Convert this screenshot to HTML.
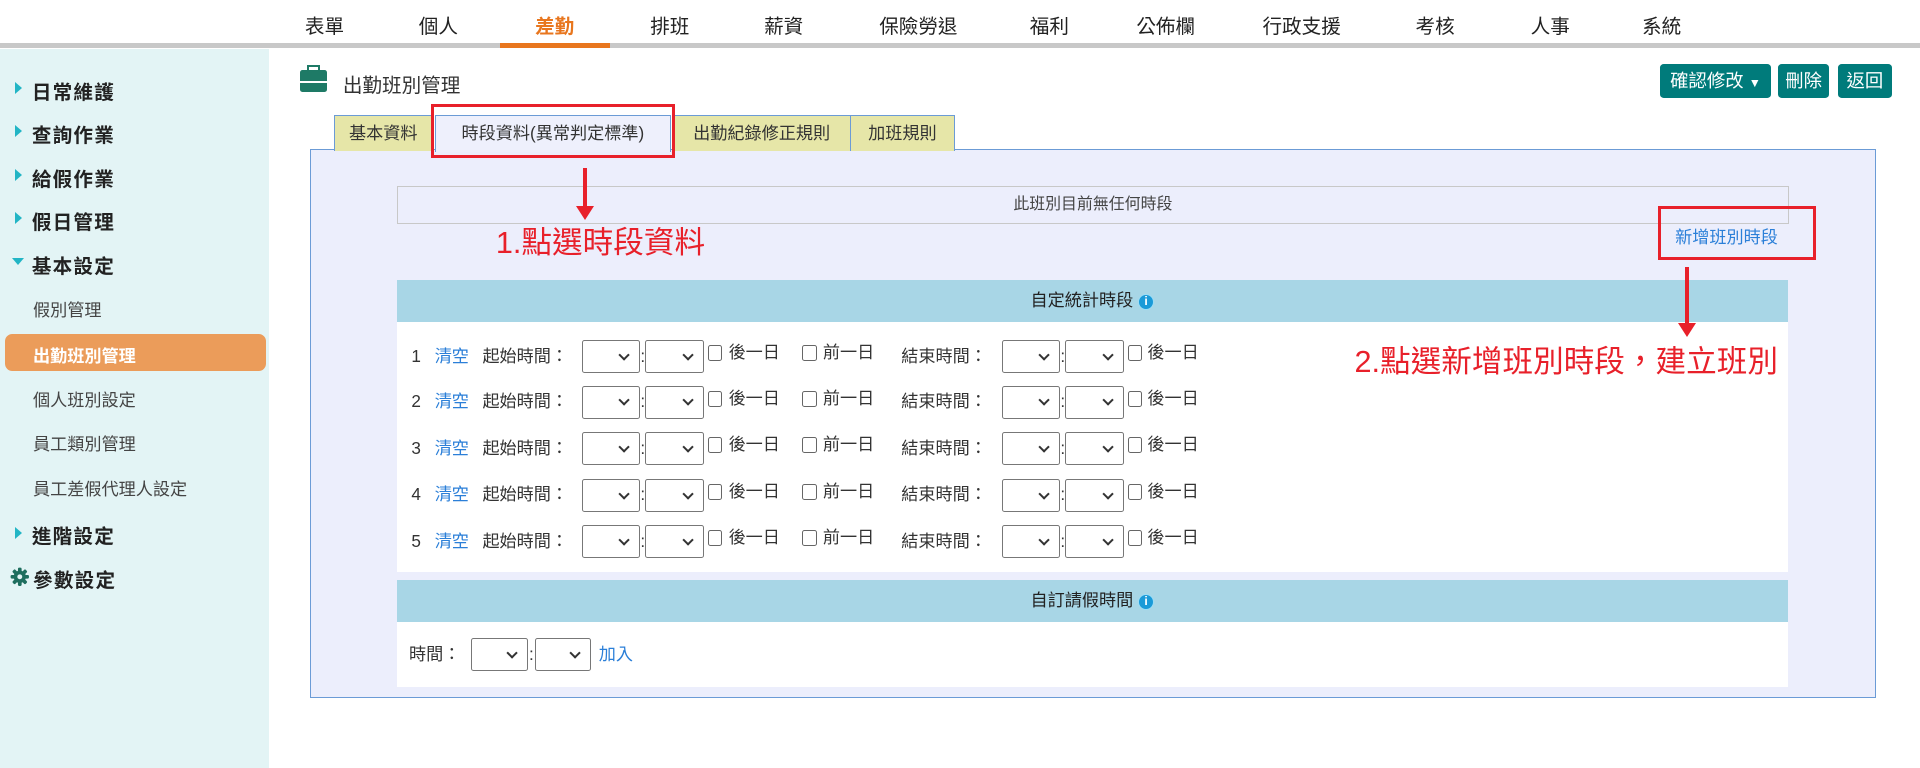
<!DOCTYPE html>
<html><head><meta charset="utf-8"><style>
*{box-sizing:border-box;margin:0;padding:0}
html,body{width:1920px;height:768px;overflow:hidden;background:#fff}
#w{position:relative;width:1568px;height:627px;zoom:1.22449;font-family:"Liberation Sans","Noto Sans CJK TC",sans-serif;color:#333}
.a{position:absolute;white-space:nowrap}
.nav{top:8px;font-size:16px;color:#222;transform:translateX(-50%)}
.side{left:0;top:40px;width:220px;height:587px;background:#e3f4f5}
.m{font-size:16px;font-weight:bold;color:#222;letter-spacing:1px;left:26px}
.tri{position:absolute;left:-14px;top:5px;width:0;height:0;border-top:5px solid transparent;border-bottom:5px solid transparent;border-left:6px solid #22b5c5}
.s{font-size:14px;color:#444;left:27px}
.btn{background:#007b7b;color:#fff;font-size:15px;border-radius:3px;height:28px;line-height:28px;text-align:center;top:52px}
.tab{top:94px;height:29px;border:1px solid #6b9bd6;border-bottom:none;background:#e6e6a8;font-size:14px;color:#333;line-height:28px;text-align:center}
.red{border:3px solid #e8202a}
.sel{width:48px;height:27px;border:1px solid #777;border-radius:2px;background:#fff}
.sel:after{content:"";position:absolute;right:9px;top:8px;width:5px;height:5px;border-right:2px solid #333;border-bottom:2px solid #333;transform:rotate(45deg)}
.cb{width:12px;height:13px;border:1px solid #666;border-radius:2px;background:#fff}
.t{font-size:14px;color:#333;line-height:20px}
.lk{font-size:14px;color:#2b7fd8;line-height:20px}
.hd{left:324px;width:1136px;height:34px;background:#a8d6e6;font-size:14px;color:#222;text-align:center;line-height:34px}
.info{display:inline-block;width:13px;height:13px;border-radius:50%;background:#1a9ad8;border:1px solid #9cdcf5;color:#fff;font-size:10px;line-height:11px;text-align:center;vertical-align:middle;margin-left:4px;font-weight:bold}
.ann{font-size:25px;color:#e8202a;line-height:30px}
</style></head><body><div id="w">
<div class="a" style="left:0;top:35px;width:1568px;height:4px;background:#c8c8c8"></div>
<div class="a" style="left:408px;top:35px;width:90px;height:4px;background:#e8761e"></div>
<div class="a nav" style="left:265px">表單</div>
<div class="a nav" style="left:358px">個人</div>
<div class="a nav" style="left:453px;color:#e8761e;font-weight:bold">差勤</div>
<div class="a nav" style="left:547px">排班</div>
<div class="a nav" style="left:640px">薪資</div>
<div class="a nav" style="left:750px">保險勞退</div>
<div class="a nav" style="left:857px">福利</div>
<div class="a nav" style="left:952px">公佈欄</div>
<div class="a nav" style="left:1063px">行政支援</div>
<div class="a nav" style="left:1172px">考核</div>
<div class="a nav" style="left:1266px">人事</div>
<div class="a nav" style="left:1357px">系統</div>

<div class="a side"></div>
<div class="a m" style="top:62px"><i class="tri"></i>日常維護</div>
<div class="a m" style="top:97px"><i class="tri"></i>查詢作業</div>
<div class="a m" style="top:133px"><i class="tri"></i>給假作業</div>
<div class="a m" style="top:168px"><i class="tri"></i>假日管理</div>
<div class="a m" style="top:204px"><i class="tri" style="left:-16px;top:7px;border-left:5px solid transparent;border-right:5px solid transparent;border-top:6px solid #22b5c5;border-bottom:none"></i>基本設定</div>
<div class="a s" style="top:242px">假別管理</div>
<div class="a" style="left:4px;top:273px;width:213px;height:30px;background:#eb9c5a;border-radius:6px"></div>
<div class="a s" style="top:279px;color:#fff;font-weight:bold">出勤班別管理</div>
<div class="a s" style="top:315px">個人班別設定</div>
<div class="a s" style="top:351px">員工類別管理</div>
<div class="a s" style="top:388px">員工差假代理人設定</div>
<div class="a m" style="top:425px"><i class="tri"></i>進階設定</div>
<svg class="a" style="left:8px;top:463px" width="16" height="16" viewBox="0 0 16 16"><g fill="#1e6e5e"><circle cx="8" cy="8" r="5"/><rect x="6.5" y="0.5" width="3" height="15" rx="1"/><rect x="0.5" y="6.5" width="15" height="3" rx="1"/><rect x="6.5" y="0.5" width="3" height="15" rx="1" transform="rotate(45 8 8)"/><rect x="6.5" y="0.5" width="3" height="15" rx="1" transform="rotate(-45 8 8)"/></g><circle cx="8" cy="8" r="2" fill="#e3f4f5"/></svg>
<div class="a m" style="top:461px;left:27px">參數設定</div>

<div class="a" style="left:245px;top:57px;width:22px;height:18px;background:#1e7a66;border-radius:2px"></div>
<div class="a" style="left:251px;top:53px;width:10px;height:5px;border:2px solid #1e7a66;border-bottom:none"></div>
<div class="a" style="left:245px;top:66px;width:22px;height:2px;background:#fff"></div>
<div class="a" style="left:280px;top:56px;font-size:16px;color:#333">出勤班別管理</div>

<div class="a btn" style="left:1356px;width:90px">確認修改 <span style="font-size:10px">▼</span></div>
<div class="a btn" style="left:1452px;width:42px">刪除</div>
<div class="a btn" style="left:1501px;width:44px">返回</div>

<div class="a" style="left:253px;top:122px;width:1279px;height:448px;background:#eceefc;border:1px solid #6b9bd6"></div>
<div class="a tab" style="left:273px;width:80px">基本資料</div>
<div class="a tab" style="left:355px;width:193px;background:#eef0fc;height:30px">時段資料(異常判定標準)</div>
<div class="a tab" style="left:549px;width:146px">出勤紀錄修正規則</div>
<div class="a tab" style="left:694px;width:86px">加班規則</div>
<div class="a red" style="left:352px;top:85px;width:199px;height:44px"></div>

<div class="a" style="left:324px;top:152px;width:1137px;height:31px;border:1px solid #c8c8c8;font-size:13px;text-align:center;line-height:29px;color:#444">此班別目前無任何時段</div>
<div class="a lk" style="left:1368px;top:184px">新增班別時段</div>
<div class="a red" style="left:1354px;top:168px;width:129px;height:44px"></div>

<div class="a hd" style="top:229px">自定統計時段<span class="info">i</span></div>
<div class="a" style="left:324px;top:263px;width:1136px;height:204px;background:#fff"></div>
<div class="a hd" style="top:474px">自訂請假時間<span class="info">i</span></div>
<div class="a" style="left:324px;top:508px;width:1136px;height:53px;background:#fff"></div>

<div id="rows"></div>
<div class="a t" style="left:334px;top:524px">時間：</div>
<div class="a sel" style="left:385px;top:521px;width:46px"></div>
<div class="a t" style="left:432px;top:524px">:</div>
<div class="a sel" style="left:437px;top:521px;width:46px"></div>
<div class="a lk" style="left:489px;top:524px">加入</div>

<div class="a" style="left:476px;top:137px;width:3px;height:35px;background:#e8202a"></div>
<div class="a" style="left:470px;top:168px;border-left:8px solid transparent;border-right:8px solid transparent;border-top:12px solid #e8202a"></div>
<div class="a ann" style="left:405px;top:184px">1.點選時段資料</div>
<div class="a" style="left:1376px;top:218px;width:3px;height:48px;background:#e8202a"></div>
<div class="a" style="left:1370px;top:264px;border-left:8px solid transparent;border-right:8px solid transparent;border-top:12px solid #e8202a"></div>
<div class="a ann" style="right:116px;top:281px">2.點選新增班別時段，建立班別</div>
<script>
var h='';[291,328,366,404,442].forEach(function(y,i){var t=y-10,s=y-13;
h+='<div class="a t" style="left:336px;top:'+t+'px">'+(i+1)+'</div>'+
'<div class="a lk" style="left:355px;top:'+t+'px">清空</div>'+
'<div class="a t" style="left:394px;top:'+t+'px">起始時間：</div>'+
'<div class="a sel" style="left:475px;top:'+s+'px"></div><div class="a t" style="left:523px;top:'+t+'px">:</div>'+
'<div class="a sel" style="left:527px;top:'+s+'px"></div>'+
'<div class="a cb" style="left:578px;top:'+(y-9)+'px"></div><div class="a t" style="left:595px;top:'+(t-3)+'px">後一日</div>'+
'<div class="a cb" style="left:655px;top:'+(y-9)+'px"></div><div class="a t" style="left:672px;top:'+(t-3)+'px">前一日</div>'+
'<div class="a t" style="left:736px;top:'+t+'px">結束時間：</div>'+
'<div class="a sel" style="left:818px;top:'+s+'px"></div><div class="a t" style="left:866px;top:'+t+'px">:</div>'+
'<div class="a sel" style="left:870px;top:'+s+'px"></div>'+
'<div class="a cb" style="left:921px;top:'+(y-9)+'px"></div><div class="a t" style="left:937px;top:'+(t-3)+'px">後一日</div>';});
document.getElementById('rows').outerHTML=h;
</script>
</div></body></html>
